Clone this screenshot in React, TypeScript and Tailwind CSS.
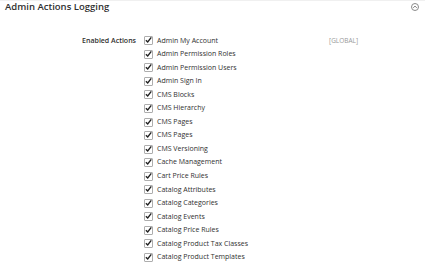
const actions = [
  "Admin My Account",
  "Admin Permission Roles",
  "Admin Permission Users",
  "Admin Sign In",
  "CMS Blocks",
  "CMS Hierarchy",
  "CMS Pages",
  "CMS Pages",
  "CMS Versioning",
  "Cache Management",
  "Cart Price Rules",
  "Catalog Attributes",
  "Catalog Categories",
  "Catalog Events",
  "Catalog Price Rules",
  "Catalog Product Tax Classes",
  "Catalog Product Templates",
];

function CheckBox() {
  return (
    <span className="flex items-center justify-center w-[9px] h-[9px] border border-[#adadad] bg-white rounded-[1px] shrink-0">
      <svg width="8" height="8" viewBox="0 0 8 8" className="-mt-[1px]">
        <path d="M1 4.2 L3.1 6.3 L7.2 1" fill="none" stroke="#222" strokeWidth="1.6" />
      </svg>
    </span>
  );
}

export default function App() {
  return (
    <div className="w-[425px] h-[263px] overflow-hidden bg-white font-['Open_Sans',sans-serif] border-t border-[#f0f0f0]">
      {/* Section header */}
      <div className="flex items-center justify-between pl-[5px] pr-[6px] h-[12px]">
        <h2 className="text-[9.5px] font-semibold text-[#303030] leading-none">Admin Actions Logging</h2>
        <span className="flex items-center justify-center w-[8px] h-[8px] rounded-full border border-[#8a8a8a]">
          <svg width="6" height="6" viewBox="0 0 6 6">
            <path d="M1.3 3.8 L3 2.1 L4.7 3.8" fill="none" stroke="#666" strokeWidth="0.9" />
          </svg>
        </span>
      </div>

      {/* Form row */}
      <div className="flex mt-[21px]">
        <div className="w-[137px] text-right pr-[1px] text-[7px] font-semibold text-[#303030] h-[13.55px] leading-[13.55px]">
          Enabled Actions
        </div>
        <ul className="w-[186px] pl-[7px] flex flex-col">
          {actions.map((a, i) => (
            <li key={i} className="flex items-center gap-[4px] h-[13.55px]">
              <CheckBox />
              <span className="text-[7px] text-[#303030] whitespace-nowrap">{a}</span>
            </li>
          ))}
        </ul>
        <div className="pl-[6px] text-[6.5px] text-[#999] h-[13.55px] leading-[13.55px]">[GLOBAL]</div>
      </div>
    </div>
  );
}
